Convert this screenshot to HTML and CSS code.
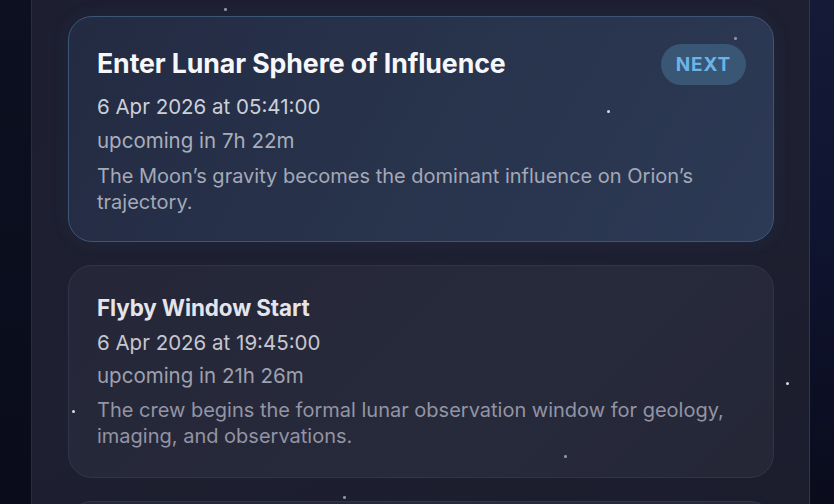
FILE: index.html
```html
<!DOCTYPE html>
<html lang="en">
<head>
<meta charset="utf-8">
<title>Timeline</title>
<link rel="stylesheet" href="styles.css">
</head>
<body>
<div class="stars">
  <span class="star s-dim" style="left:224px;top:8px"></span>
  <span class="star s-dim" style="left:734px;top:37px"></span>
  <span class="star" style="left:607px;top:110px"></span>
  <span class="star" style="left:72px;top:410px"></span>
  <span class="star" style="left:786px;top:382px"></span>
  <span class="star s-dim" style="left:564px;top:455px"></span>
  <span class="star s-dim" style="left:343px;top:496px"></span>
</div>
<main class="panel">
  <article class="card card-next">
    <div class="card-head">
      <h2 class="title title-lg">Enter Lunar Sphere of Influence</h2>
      <span class="badge">NEXT</span>
    </div>
    <p class="date">6 Apr 2026 at 05:41:00</p>
    <p class="eta">upcoming in 7h 22m</p>
    <p class="desc">The Moon’s gravity becomes the dominant influence on Orion’s trajectory.</p>
  </article>
  <article class="card card-plain">
    <h2 class="title">Flyby Window Start</h2>
    <p class="date">6 Apr 2026 at 19:45:00</p>
    <p class="eta">upcoming in 21h 26m</p>
    <p class="desc">The crew begins the formal lunar observation window for geology, imaging, and observations.</p>
  </article>
  <article class="card card-peek"></article>
</main>
</body>
</html>
```
FILE: styles.css
```css
* { box-sizing: border-box; }
html, body { margin: 0; padding: 0; }
body {
  width: 834px;
  height: 504px;
  overflow: hidden;
  font-family: Inter, "Noto Sans", sans-serif;
  background: linear-gradient(180deg, #0c1020 0%, #0a0c1b 100%);
  position: relative;
}
body::after {
  content: "";
  position: absolute;
  right: 0; top: 0;
  width: 30px; height: 504px;
  background: linear-gradient(180deg, #151b36 0%, #0f1430 45%, #0a0c1c 100%);
  z-index: 0;
}
.panel {
  position: relative;
  z-index: 1;
  margin: -20px 24px 0 31px;
  height: 560px;
  overflow: hidden;
  border-left: 1px solid #2b2d3d;
  border-right: 1px solid #34374a;
  background: linear-gradient(160deg, #1d1f30 0%, #1e2031 50%, #1b1d2d 100%);
  padding: 36px 35px 0 36px;
  display: flex;
  flex-direction: column;
  gap: 23px;
}
.card {
  flex: none;
  border-radius: 24px;
  border: 1px solid #32354a;
  background: linear-gradient(135deg, #252738 0%, #272a3b 60%, #252737 100%);
  padding: 28px 28px 28px 28px;
}
.card-next {
  border: 1.5px solid #3d5676;
  background: linear-gradient(120deg, #232b42 0%, #28334c 50%, #2d3a55 100%);
  box-shadow: 0 0 18px rgba(60, 100, 150, 0.12);
  padding-top: 28px;
  padding-bottom: 26px;
}
.card-peek { height: 60px; }
.card-head {
  display: flex;
  align-items: center;
  justify-content: space-between;
  height: 41px;
}
.title {
  margin: 0;
  font-size: 22.4px;
  line-height: 28px;
  font-weight: 700;
  color: #e4e5eb;
  letter-spacing: -0.1px;
}
.title-lg {
  font-size: 26.7px;
  color: #f6f7fa;
  line-height: 30px;
  margin-top: -6px;
}
.badge {
  height: 41px;
  padding: 0 15px;
  border-radius: 21px;
  background: #3a5675;
  color: #6cb4e8;
  font-weight: 700;
  font-size: 19px;
  letter-spacing: 0.8px;
  display: flex;
  align-items: center;
  margin-right: -1px;
  margin-top: -2px;
}
.date, .eta, .desc { margin: 0; }
.date {
  margin-top: 7px;
  font-size: 20.5px;
  line-height: 28px;
  color: #cdd0d9;
}
.eta {
  margin-top: 6px;
  font-size: 20.5px;
  line-height: 28px;
  color: #a9aebb;
}
.desc {
  margin-top: 8px;
  font-size: 20px;
  line-height: 26px;
  color: #a4a9b7;
}
.card-plain .date { margin-top: 7px; color: #c6c7d0; }
.card-plain .eta { margin-top: 5px; color: #9fa0ad; }
.card-plain .desc { margin-top: 7px; color: #9394a4; }
.stars { position: absolute; inset: 0; z-index: 2; pointer-events: none; }
.star {
  position: absolute;
  width: 3px; height: 3px;
  border-radius: 50%;
  background: #d8dbe6;
}
.s-dim { width: 2.5px; height: 2.5px; background: #8d91a3; }
```
